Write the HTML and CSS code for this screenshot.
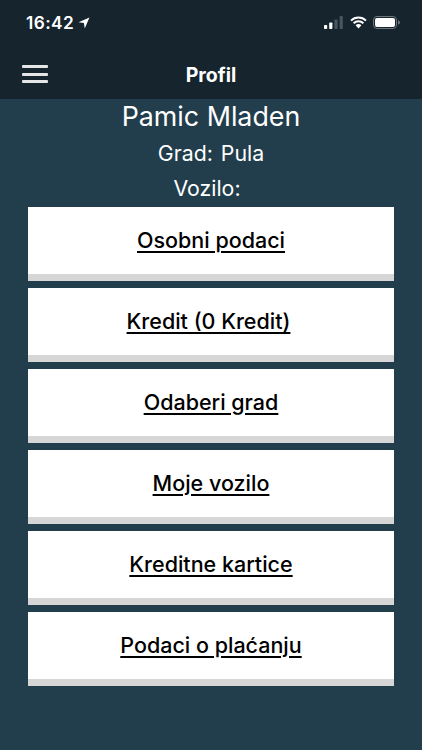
FILE: index.html
```html
<!DOCTYPE html>
<html lang="hr">
<head>
<meta charset="utf-8">
<title>Profil</title>
<link rel="stylesheet" href="styles.css">
</head>
<body>
<div class="app">
  <header class="top">
    <div class="status">
      <div class="time">16:42
        <svg class="loc" width="12" height="12" viewBox="0 0 11 11"><path d="M10.5 .5 L.5 4.8 L5.4 5.6 L6.2 10.5 Z" fill="#fff"/></svg>
      </div>
      <div class="sys">
        <svg width="20" height="13" viewBox="0 0 20 13" class="sig"><rect x="0" y="9" width="3.2" height="4" rx=".8" fill="#fff"/><rect x="5.2" y="6.5" width="3.2" height="6.5" rx=".8" fill="#fff"/><rect x="10.4" y="3.5" width="3.2" height="9.5" rx=".8" fill="#4a565d"/><rect x="15.6" y="0" width="3.2" height="13" rx=".8" fill="#4a565d"/></svg>
        <svg width="17" height="13" viewBox="0 0 17 13" class="wifi"><path d="M1 4.6 A10.6 10.6 0 0 1 16 4.6 M3.6 7.2 A7 7 0 0 1 13.4 7.2" fill="none" stroke="#fff" stroke-width="2"/><path d="M5.6 9.3 A4 4 0 0 1 11.4 9.3 L8.5 12.4 Z" fill="#fff"/></svg>
        <svg width="27" height="13" viewBox="0 0 27 13" class="batt"><rect x=".5" y=".5" width="23" height="12" rx="3.5" fill="none" stroke="#6d767b"/><rect x="2" y="2" width="20" height="9" rx="2" fill="#fff"/><path d="M25 4.5 a2 2 0 0 1 0 4 Z" fill="#6d767b"/></svg>
      </div>
    </div>
    <div class="nav">
      <button class="menu" aria-label="Menu"><span></span><span></span><span></span></button>
      <h1 class="title">Profil</h1>
    </div>
  </header>
  <main class="content">
    <div class="name">Pamic Mladen</div>
    <div class="info"><span>Grad:</span><span>Pula</span></div>
    <div class="info"><span>Vozilo:</span><span></span></div>
    <nav class="list">
      <a class="card" href="#"><span class="label">Osobni podaci</span></a>
      <a class="card card-offset" href="#"><span class="label">Kredit (0 Kredit)</span></a>
      <a class="card" href="#"><span class="label">Odaberi grad</span></a>
      <a class="card" href="#"><span class="label">Moje vozilo</span></a>
      <a class="card" href="#"><span class="label">Kreditne kartice</span></a>
      <a class="card" href="#"><span class="label">Podaci o plaćanju</span></a>
    </nav>
  </main>
</div>
</body>
</html>
```
FILE: styles.css
```css
* { box-sizing: border-box; }
html, body { margin: 0; height: 100%; }
body { font-family: Inter, "Liberation Sans", sans-serif; background: #223d4c; overflow: hidden; }
.app { width: 422px; height: 750px; display: flex; flex-direction: column; }
.top { height: 99px; background: #15242d; color: #fff; flex: none; }
.status { height: 45px; display: flex; justify-content: space-between; align-items: center; padding: 0 22px 0 26px; }
.time { font-size: 17.3px; font-weight: 600; letter-spacing: .4px; display: flex; align-items: center; gap: 4px; }
.sys { display: flex; align-items: center; gap: 6px; }
.nav { height: 54px; display: flex; align-items: center; justify-content: center; position: relative; padding-top: 6px; }
.menu { position: absolute; left: 22px; top: 20px; width: 26px; height: 18px; padding: 0; background: none; border: 0; display: flex; flex-direction: column; justify-content: space-between; }
.menu span { display: block; height: 3px; background: #e4e6e7; border-radius: 1px; }
.title { margin: 0; font-size: 19.5px; font-weight: 700; color: #fff; }
.content { flex: 1; color: #fff; display: flex; flex-direction: column; align-items: center; }
.name { font-size: 26.8px; line-height: 34px; height: 36px; font-weight: 400; }
.info { font-size: 21.3px; line-height: 36px; height: 36px; display: flex; gap: 8px; }
.info + .info { margin-top: -1px; margin-bottom: 1px; }
.list { width: 366px; display: flex; flex-direction: column; gap: 7px; }
.card { height: 74px; background: #fff; border-bottom: 7px solid #d6d6d6; display: flex; align-items: center; justify-content: center; color: #000; text-decoration: underline; text-underline-offset: 3px; text-decoration-thickness: 2px; font-size: 21.5px; font-weight: 500; padding-bottom: 2px; }
.card-offset { padding-right: 5px; }
```
